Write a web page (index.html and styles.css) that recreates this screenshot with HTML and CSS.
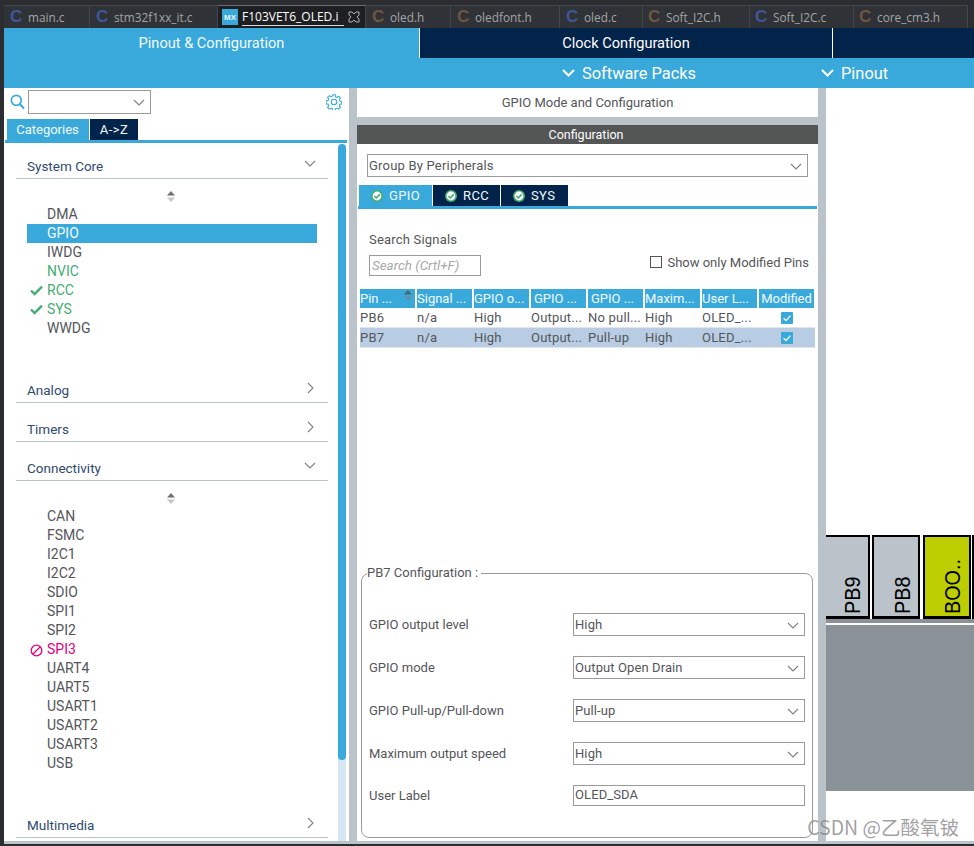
FILE: index.html
```html
<!DOCTYPE html>
<html lang="en">
<head>
<meta charset="utf-8">
<title>F103VET6_OLED.ioc</title>
<link rel="stylesheet" href="styles.css">
</head>
<body>
<svg class="defs" width="0" height="0" aria-hidden="true">
  <symbol id="down" viewBox="0 0 12 7"><path d="M1 1l5 5 5-5" fill="none" stroke="currentColor" stroke-width="1.1"/></symbol>
  <symbol id="right" viewBox="0 0 7 12"><path d="M1 1l5 5-5 5" fill="none" stroke="currentColor" stroke-width="1.1"/></symbol>
  <symbol id="sort" viewBox="0 0 8 11"><path d="M4 0l4 4.500H0z" fill="#6b7070"/><path d="M0 6.500h8L4 11z" fill="#c4c8ca"/></symbol>
  <symbol id="sort-head" viewBox="0 0 8 11"><path d="M4 0l4 4.500H0z" fill="#4f6470"/><path d="M0 6.500h8L4 11z" fill="#5f8fa8"/></symbol>
  <symbol id="check" viewBox="0 0 13 11"><path d="M1 5.500l3.600 3.600L12 1.600" fill="none" stroke="#45ad72" stroke-width="2.400"/></symbol>
  <symbol id="okdot" viewBox="0 0 12 12"><circle cx="6" cy="6" r="6" fill="#45ad72"/><circle cx="6" cy="6" r="4.400" fill="#fff"/><path d="M3.400 6l1.900 1.900L8.800 4.400" fill="none" stroke="#45ad72" stroke-width="1.600"/></symbol>
  <symbol id="tick" viewBox="0 0 12 12"><rect width="12" height="12" rx="1" fill="#39a9dc"/><path d="M2.600 6.200l2.400 2.400 4.400-5" fill="none" stroke="#fff" stroke-width="1.300"/></symbol>
</svg>

<nav class="ide-tabs">
  <div class="ide-tab w86"><span class="lang c">C</span>main.c</div>
  <div class="ide-tab w128"><span class="lang c">C</span>stm32f1xx_it.c</div>
  <div class="ide-tab active"><span class="mx">MX</span><span class="active-name">F103VET6_OLED.i</span>
    <svg class="close" width="12" height="12" viewBox="0 0 12 12"><path d="M1 1l3 0 2 2 2-2 3 0 0 3-2 2 2 2 0 3-3 0-2-2-2 2-3 0 0-3 2-2-2-2z" fill="none" stroke="#aeb1b3"/></svg>
  </div>
  <div class="ide-tab w85"><span class="lang h">C</span>oled.h</div>
  <div class="ide-tab w109"><span class="lang h">C</span>oledfont.h</div>
  <div class="ide-tab w83"><span class="lang c">C</span>oled.c</div>
  <div class="ide-tab w107"><span class="lang h">C</span>Soft_I2C.h</div>
  <div class="ide-tab w104"><span class="lang c">C</span>Soft_I2C.c</div>
  <div class="ide-tab w114"><span class="lang h">C</span>core_cm3.h</div>
</nav>

<div class="app">
  <header class="top">
    <div class="top-row">
      <div class="mode on">Pinout &amp; Configuration</div>
      <div class="mode clock">Clock Configuration</div>
      <div class="mode rest"></div>
    </div>
    <div class="menu-row">
      <div class="menu packs"><svg class="menu-chev" width="13" height="8" viewBox="0 0 13 8"><path d="M1 1l5.500 5.500L12 1" fill="none" stroke="#fff" stroke-width="2"/></svg>Software Packs</div>
      <div class="menu pinout"><svg class="menu-chev" width="13" height="8" viewBox="0 0 13 8"><path d="M1 1l5.500 5.500L12 1" fill="none" stroke="#fff" stroke-width="2"/></svg>Pinout</div>
    </div>
  </header>

  <main class="work">
    <aside class="side">
      <div class="search-row">
        <svg class="glass" width="15" height="16" viewBox="0 0 15 16"><circle cx="6.300" cy="6.300" r="5" fill="none" stroke="#39a9dc" stroke-width="1.700"/><path d="M10 10.200l4 4.300" stroke="#39a9dc" stroke-width="2"/></svg>
        <div class="combo"><svg class="chev" width="12" height="7"><use href="#down"/></svg></div>
        <svg class="gear" width="16" height="16" viewBox="0 0 16 16"><path d="M6.800 .8h2.400l.4 2 1.300.6 1.800-1.100 1.700 1.700-1.100 1.800.6 1.300 2 .4v2.400l-2 .4-.6 1.300 1.100 1.800-1.700 1.700-1.800-1.100-1.300.6-.4 2H6.800l-.4-2-1.300-.6-1.800 1.100-1.700-1.700 1.100-1.800-.6-1.300-2-.4V6.800l2-.4.600-1.300-1.100-1.800 1.700-1.700 1.800 1.100 1.300-.6z" fill="none" stroke="#39a9dc" stroke-width="1.100"/><circle cx="8" cy="8" r="2.700" fill="none" stroke="#39a9dc" stroke-width="1.100"/></svg>
      </div>
      <div class="side-tabs">
        <div class="side-tab cat">Categories</div>
        <div class="side-tab az">A-&gt;Z</div>
      </div>
      <div class="blue-rule"></div>
      <div class="side-body">
        <div class="side-list">
          <div class="acc first"><span>System Core</span><svg class="acc-chev" width="12" height="7"><use href="#down"/></svg></div>
          <div class="group core">
            <div class="sorter"><svg width="8" height="11"><use href="#sort"/></svg></div>
            <div class="item">DMA</div>
            <div class="item sel">GPIO</div>
            <div class="item">IWDG</div>
            <div class="item ok">NVIC</div>
            <div class="item ok"><svg class="mark" width="13" height="11"><use href="#check"/></svg>RCC</div>
            <div class="item ok"><svg class="mark" width="13" height="11"><use href="#check"/></svg>SYS</div>
            <div class="item">WWDG</div>
          </div>
          <div class="acc"><span>Analog</span><svg class="acc-chev r" width="7" height="12"><use href="#right"/></svg></div>
          <div class="acc"><span>Timers</span><svg class="acc-chev r" width="7" height="12"><use href="#right"/></svg></div>
          <div class="acc"><span>Connectivity</span><svg class="acc-chev" width="12" height="7"><use href="#down"/></svg></div>
          <div class="group conn">
            <div class="sorter"><svg width="8" height="11"><use href="#sort"/></svg></div>
            <div class="item">CAN</div>
            <div class="item">FSMC</div>
            <div class="item">I2C1</div>
            <div class="item">I2C2</div>
            <div class="item">SDIO</div>
            <div class="item">SPI1</div>
            <div class="item">SPI2</div>
            <div class="item bad"><svg class="mark" width="13" height="13" viewBox="0 0 13 13"><circle cx="6.500" cy="6.500" r="5.300" fill="none" stroke="#e6007e" stroke-width="1.300"/><path d="M3 10l7-7" stroke="#e6007e" stroke-width="1.300"/></svg>SPI3</div>
            <div class="item">UART4</div>
            <div class="item">UART5</div>
            <div class="item">USART1</div>
            <div class="item">USART2</div>
            <div class="item">USART3</div>
            <div class="item">USB</div>
          </div>
          <div class="acc"><span>Multimedia</span><svg class="acc-chev r" width="7" height="12"><use href="#right"/></svg></div>
        </div>
        <div class="scroll"><div class="thumb"></div></div>
      </div>
    </aside>

    <section class="center">
      <div class="center-title">GPIO Mode and Configuration</div>
      <div class="config">
        <div class="config-bar">Configuration</div>
        <div class="field group-by">Group By Peripherals<svg class="chev" width="12" height="7"><use href="#down"/></svg></div>
        <div class="peri-tabs">
          <div class="peri on w73"><svg width="12" height="12"><use href="#okdot"/></svg>GPIO</div>
          <div class="peri w67"><svg width="12" height="12"><use href="#okdot"/></svg>RCC</div>
          <div class="peri w67"><svg width="12" height="12"><use href="#okdot"/></svg>SYS</div>
        </div>
        <div class="peri-rule"></div>
        <div class="search-title">Search Signals</div>
        <div class="search-line">
          <div class="search-input">Search (Crtl+F)</div>
          <label class="modified"><span class="box"></span>Show only Modified Pins</label>
        </div>
        <div class="pin-table">
          <div class="row head">
            <div class="cell">Pin ...<svg class="col-sort" width="8" height="11"><use href="#sort-head"/></svg></div><div class="cell">Signal ...</div><div class="cell">GPIO o...</div><div class="cell pad">GPIO ...</div><div class="cell pad">GPIO ...</div><div class="cell">Maxim...</div><div class="cell">User L...</div><div class="cell ctr">Modified</div>
          </div>
          <div class="row">
            <div class="cell">PB6</div><div class="cell">n/a</div><div class="cell">High</div><div class="cell">Output...</div><div class="cell">No pull...</div><div class="cell">High</div><div class="cell">OLED_...</div><div class="cell ctr"><svg width="12" height="12"><use href="#tick"/></svg></div>
          </div>
          <div class="row picked">
            <div class="cell">PB7</div><div class="cell">n/a</div><div class="cell">High</div><div class="cell">Output...</div><div class="cell">Pull-up</div><div class="cell">High</div><div class="cell">OLED_...</div><div class="cell ctr"><svg width="12" height="12"><use href="#tick"/></svg></div>
          </div>
        </div>
        <fieldset class="pin-config">
          <legend>PB7 Configuration :</legend>
          <div class="cfg-row"><span>GPIO output level</span><div class="field">High<svg class="chev" width="12" height="7"><use href="#down"/></svg></div></div>
          <div class="cfg-row"><span>GPIO mode</span><div class="field">Output Open Drain<svg class="chev" width="12" height="7"><use href="#down"/></svg></div></div>
          <div class="cfg-row"><span>GPIO Pull-up/Pull-down</span><div class="field">Pull-up<svg class="chev" width="12" height="7"><use href="#down"/></svg></div></div>
          <div class="cfg-row"><span>Maximum output speed</span><div class="field">High<svg class="chev" width="12" height="7"><use href="#down"/></svg></div></div>
          <div class="cfg-row text"><span>User Label</span><div class="field">OLED_SDA</div></div>
        </fieldset>
      </div>
    </section>

    <section class="chip">
      <div class="pin p9"><span>PB9</span></div>
      <div class="pin p8"><span>PB8</span></div>
      <div class="pin boot"><span>BOO..</span></div>
      <div class="pin next"></div>
      <div class="chip-edge"></div>
      <div class="chip-body"></div>
    </section>
  </main>
</div>
<div class="watermark">CSDN @乙酸氧铍</div>
</body>
</html>
```

FILE: styles.css
```css
* { box-sizing: border-box; }
html, body { margin: 0; height: 846px; overflow: hidden; }
body {
  position: relative;
  display: flex;
  flex-direction: column;
  width: 974px;
  background: #2b2d30;
  font-family: Roboto, "Liberation Sans", sans-serif;
  font-size: 14px;
  color: #54565a;
}
.defs { position: absolute; }

/* IDE tab strip */
.ide-tabs {
  display: flex;
  height: 28px;
  margin-left: 4px;
  padding-top: 5px;
  background: #2b2d30;
}
.ide-tab {
  display: flex;
  align-items: center;
  height: 23px;
  padding-left: 6px;
  border-top: 1px solid #43464a;
  border-right: 1px solid #43464a;
  background: #2f3236;
  color: #a3a6a8;
  font-family: "Open Sans", "Noto Sans", sans-serif;
  font-size: 11.800px;
  white-space: nowrap;
}
.w86 { width: 86px; }
.w128 { width: 128px; }
.w85 { width: 85px; }
.w109 { width: 109px; }
.w83 { width: 83px; }
.w107 { width: 107px; padding-left: 5px; }
.w104 { width: 104px; padding-left: 5px; }
.w114 { width: 114px; padding-left: 5px; }
.lang {
  width: 18px;
  font-family: "Liberation Sans", sans-serif;
  font-size: 17px;
  font-weight: 700;
}
.lang.c { color: #3f5796; }
.lang.h { color: #6e5640; }
.ide-tab.active {
  width: 148px;
  padding-left: 4px;
  background: #1e1f22;
  color: #fff;
  border-top-color: #6c6f73;
}
.mx {
  display: flex;
  align-items: center;
  justify-content: center;
  flex: none;
  width: 16px;
  height: 16px;
  margin-right: 4px;
  background: #39a9dc;
  color: #e8f6fc;
  font-family: "Liberation Sans", sans-serif;
  font-size: 8px;
  font-weight: 700;
}
.active-name {
  width: 102px;
  height: 18px;
  font-size: 12px;
  line-height: 17px;
  border-bottom: 1px solid #d8d8d8;
  overflow: hidden;
}
.close { margin-left: 4px; }

/* application */
.app {
  flex: none;
  display: flex;
  flex-direction: column;
  height: 816px;
  margin-left: 4px;
  background: #b9c3c9;
}
.top { flex: none; background: #39a9dc; color: #fff; }
.top-row { display: flex; height: 30px; }
.mode {
  display: flex;
  align-items: center;
  justify-content: center;
  font-size: 14.600px;
}
.mode.on { width: 415px; padding-bottom: 1px; color: #f2fafe; }
.mode.clock { width: 414px; border-left: 1px solid #fff; border-right: 1px solid #fff; background: #02234a; }
.mode.rest { flex: 1; background: #02234a; }
.menu-row { display: flex; height: 30px; }
.menu { display: flex; align-items: center; font-size: 16.400px; }
.menu-chev { margin-right: 7px; }
.packs { width: 259px; margin-left: 558px; }
.pinout { flex: 1; }

.work { flex: 1; display: flex; gap: 8px; min-height: 0; padding-bottom: 3px; }

/* left column */
.side {
  flex: none;
  display: flex;
  flex-direction: column;
  width: 345px;
  padding-top: 2px;
  background: #fff;
}
.search-row { flex: none; display: flex; align-items: flex-start; height: 29px; }
.glass { margin: 4px 3px 0 6px; }
.combo {
  position: relative;
  width: 123px;
  height: 24px;
  border: 1px solid #9a9a9a;
}
.chev { position: absolute; top: 8px; right: 5px; color: #7d8083; }
.gear { margin: 4px 0 0 175px; }
.side-tabs { flex: none; display: flex; gap: 1px; height: 21px; margin-left: 3px; }
.side-tab { display: flex; align-items: center; justify-content: center; font-size: 13px; color: #f2fafe; }
.cat { width: 82px; padding-right: 1px; background: #39a9dc; }
.az { width: 48px; letter-spacing: .5px; background: #02234a; }
.blue-rule { flex: none; height: 3px; margin: 0 2px 0 1px; background: #39a9dc; }
.side-body { flex: 1; display: flex; min-height: 0; }
.side-list { flex: none; width: 334px; overflow: hidden; }
.acc {
  position: relative;
  display: flex;
  align-items: flex-end;
  height: 39px;
  margin: 0 10px 0 12px;
  padding: 0 0 4px 11px;
  border-bottom: 1px solid #b9c3c9;
  font-size: 13.500px;
  line-height: 16px;
  color: #2f4a70;
}
.acc.first { height: 36px; }
.acc-chev { position: absolute; right: 12px; bottom: 11px; color: #7d8083; }
.acc-chev.r { right: 14px; bottom: 8px; }
.group.core { height: 185px; }
.group.conn { height: 318px; }
.sorter { display: flex; justify-content: center; height: 26px; padding-top: 12px; }
.item {
  position: relative;
  height: 19px;
  margin: 0 21px 0 23px;
  padding-left: 20px;
  font-size: 14px;
  line-height: 19px;
  color: #54565a;
}
.item.sel { background: #39a9dc; color: #f2fafe; }
.item.ok { color: #45ad72; }
.item.bad { color: #e6007e; }
.mark { position: absolute; left: 3px; top: 4px; }
.scroll { flex: none; width: 8px; margin-top: 1px; background: #d6e6f3; border-radius: 4px 4px 0 0; }
.thumb { height: 616px; background: #39a9dc; border-radius: 4px; }

/* center column */
.center { flex: none; display: flex; flex-direction: column; gap: 8px; width: 461px; }
.center-title {
  flex: none;
  height: 29px;
  line-height: 29px;
  text-align: center;
  background: #fff;
  font-size: 13px;
}
.config { flex: 1; display: flex; flex-direction: column; min-height: 0; background: #fff; }
.config-bar {
  flex: none;
  height: 19px;
  line-height: 19px;
  padding-right: 3px;
  text-align: center;
  background: #545656;
  color: #fff;
  font-size: 12.500px;
}
.field {
  position: relative;
  height: 23px;
  padding-left: 1px;
  border: 1px solid #9a9a9a;
  font-size: 13px;
  line-height: 21px;
  letter-spacing: .1px;
  background: #fff;
}
.group-by { flex: none; margin: 10px 10px 0; letter-spacing: .2px; }
.peri-tabs { flex: none; display: flex; gap: 1px; height: 21px; margin: 8px 0 0 2px; }
.peri { display: flex; align-items: center; gap: 6px; padding-left: 12px; font-size: 13px; letter-spacing: .4px; color: #f2fafe; background: #02234a; }
.peri.on { background: #39a9dc; }
.w73 { width: 73px; }
.w67 { width: 67px; }
.peri-rule { flex: none; height: 3px; margin: 0 1px; background: #39a9dc; }
.search-title { flex: none; margin: 23px 0 0 12px; font-size: 13px; line-height: 15px; letter-spacing: .2px; }
.search-line { flex: none; display: flex; justify-content: space-between; margin: 8px 9px 0 12px; height: 21px; }
.search-input { width: 112px; height: 21px; padding-left: 2px; border: 1px solid #9a9a9a; font-size: 13.400px; font-style: italic; line-height: 19px; color: #a8a8a8; }
.modified { display: flex; align-items: center; gap: 5px; height: 14px; font-size: 13px; }
.box { width: 12px; height: 12px; border: 1px solid #54565a; }
.pin-table { flex: none; margin: 13px 3px 0 3px; font-size: 13px; }
.row { display: grid; grid-template-columns: repeat(8, 55px); column-gap: 2px; height: 20px; border-bottom: 1px solid #e3e6e8; align-items: center; letter-spacing: .2px; }
.row.head { height: 19px; border: 0; align-items: stretch; color: #f2fafe; letter-spacing: 0; }
.head .cell { position: relative; background: #39a9dc; line-height: 19px; }
.cell { white-space: nowrap; overflow: hidden; }
.cell.pad { padding-left: 3px; }
.ctr { text-align: center; }
.cell svg { display: block; margin: 0 auto; }
.head .col-sort { position: absolute; right: 3px; top: 1px; }
.row.picked { background: #b8cde3; }
.pin-config {
  flex: none;
  height: 273px;
  margin: auto 5px 3px 4px;
  padding: 0 7px;
  border: 1px solid #9a9a9a;
  border-radius: 8px;
}
.pin-config legend {
  padding: 0 3px 0 0;
  margin-left: -2px;
  font-size: 13px;
  line-height: 16px;
}
.cfg-row {
  display: grid;
  grid-template-columns: 204px 232px;
  align-items: center;
  height: 23px;
  margin-bottom: 20px;
  font-size: 13px;
}
.cfg-row:first-of-type { margin-top: 32px; }
.cfg-row.text { height: 21px; }
.cfg-row.text .field { height: 21px; line-height: 18px; }

/* chip canvas */
.chip { flex: 1; position: relative; background: #fff; overflow: hidden; }
.pin {
  position: absolute;
  top: 447px;
  height: 84px;
  border: 2px solid #000;
  border-bottom-width: 3px;
  background: #b9c3c9;
}
.pin span {
  position: absolute;
  bottom: -10px;
  transform-origin: 0 50%;
  transform: rotate(-90deg) scale(.9, 1);
  font-family: "Liberation Sans", sans-serif;
  font-size: 22px;
  line-height: 24px;
  color: #000;
  white-space: nowrap;
}
.p9 { left: -10px; width: 54px; border-left: 0; }
.p8 { left: 46px; width: 48px; }
.boot { left: 97px; width: 48px; background: #bdce00; }
.next { left: 146px; width: 20px; background: #b9c3c9; }
.p9 span { left: 37px; }
.p8 span { left: 29px; }
.boot span { left: 28px; }
.chip-edge { position: absolute; left: 0; right: 0; top: 531px; height: 4px; background: #8a9197; }
.chip-body { position: absolute; left: 0; right: 0; top: 537px; height: 166px; background: #8a9197; }

.watermark {
  position: absolute;
  right: 15px;
  top: 814px;
  font-family: "Noto Sans CJK SC", "Liberation Sans", sans-serif;
  font-size: 19.500px;
  line-height: 26px;
  color: rgba(130, 130, 130, .75);
}
```
